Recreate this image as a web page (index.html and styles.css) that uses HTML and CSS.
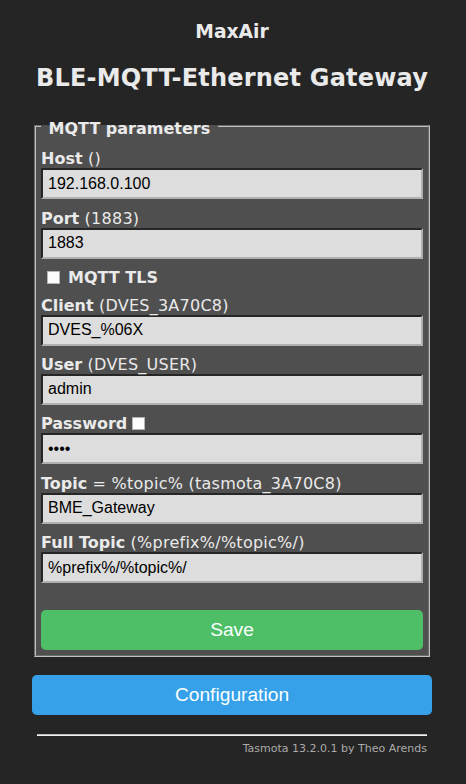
FILE: index.html
```html
<!DOCTYPE html>
<html>
<head>
<meta charset="utf-8">
<title>MaxAir - MQTT</title>
<link rel="stylesheet" href="styles.css">
</head>
<body>
<div class="page">
  <div class="head">
    <h3 class="brand">MaxAir</h3>
    <h2 class="title">BLE-MQTT-Ethernet Gateway</h2>
  </div>
  <fieldset class="panel">
    <legend class="legend">&nbsp;MQTT parameters&nbsp;</legend>
    <form class="form">
      <div class="field">
        <div class="lbl"><b>Host</b><span class="hint"> ()</span></div>
        <input class="inp" value="192.168.0.100">
      </div>
      <div class="field">
        <div class="lbl"><b>Port</b><span class="hint"> (1883)</span></div>
        <input class="inp" value="1883">
      </div>
      <div class="check"><span class="cb cb-tls"></span><b>MQTT TLS</b></div>
      <div class="field">
        <div class="lbl"><b>Client</b><span class="hint"> (DVES_3A70C8)</span></div>
        <input class="inp" value="DVES_%06X">
      </div>
      <div class="field">
        <div class="lbl"><b>User</b><span class="hint"> (DVES_USER)</span></div>
        <input class="inp" value="admin">
      </div>
      <div class="field">
        <div class="lbl"><b>Password</b><span class="cb cb-pw"></span></div>
        <input class="inp" type="password" value="****">
      </div>
      <div class="field">
        <div class="lbl"><b>Topic</b><span class="hint"> = %topic% (tasmota_3A70C8)</span></div>
        <input class="inp" value="BME_Gateway">
      </div>
      <div class="field">
        <div class="lbl"><b>Full Topic</b><span class="hint"> (%prefix%/%topic%/)</span></div>
        <input class="inp" value="%prefix%/%topic%/">
      </div>
      <button class="btn btn-save" type="button">Save</button>
    </form>
  </fieldset>
  <button class="btn btn-conf" type="button">Configuration</button>
  <div class="foot">
    <hr class="rule">
    <div class="ver">Tasmota 13.2.0.1 by Theo Arends</div>
  </div>
</div>
</body>
</html>
```

FILE: styles.css
```css
* {
  box-sizing: border-box;
}

html,
body {
  margin: 0;
}

body {
  background: #252525;
  color: #eaeaea;
  font-family: "DejaVu Sans", Verdana, sans-serif;
  padding: 21px 34px 0 32px;
}

.page {
  width: 400px;
}

.head {
  text-align: center;
}

.brand {
  margin: 0;
  font-size: 18.72px;
  line-height: 22px;
  font-weight: bold;
}

.title {
  margin: 21px 0 0;
  font-size: 24px;
  line-height: 28px;
  font-weight: bold;
  letter-spacing: 0.2px;
}

.panel {
  margin: 22px 2px 0;
  padding: 5px;
  border: 2px groove #c0c0c0;
  background: #4f4f4f;
  min-width: 0;
}

.legend {
  padding: 5px 2px 0;
  font-size: 16px;
  line-height: 19px;
  font-weight: bold;
}

.form {
  margin: 0;
  padding-top: 6px;
}

.field {
  margin-bottom: 9px;
}

.lbl,
.check {
  font-size: 16px;
  line-height: 18px;
  padding-top: 1.4px;
}

.hint {
  letter-spacing: 0.25px;
}

.check {
  margin-bottom: 8px;
}

.cb {
  display: inline-block;
  width: 13px;
  height: 13px;
  background: #fdfdfd;
  border: 1px solid #b4b4b4;
  vertical-align: -1px;
}

.cb-tls {
  margin: 0 8px 0 6px;
}

.cb-pw {
  margin-left: 5px;
}

.inp {
  display: block;
  width: 100%;
  height: 31px;
  margin: 0;
  padding: 0 5px;
  border-style: solid;
  border-width: 2px;
  border-color: #262626 #b0b0b0 #b0b0b0 #262626;
  background: #dddddd;
  color: #000000;
  font-family: "Liberation Sans", Arial, sans-serif;
  font-size: 16px;
  outline: none;
}

.btn {
  display: block;
  width: 100%;
  height: 40px;
  padding: 0;
  border: 0;
  border-radius: 4.8px;
  color: #faffff;
  font-family: "Liberation Sans", Arial, sans-serif;
  font-size: 19.2px;
  line-height: 40px;
  text-align: center;
}

.btn-save {
  margin-top: 27px;
  background: #4fbf67;
}

.btn-conf {
  margin-top: 18px;
  background: #36a1e8;
}

.foot {
  padding: 0 5px;
  text-align: right;
}

.rule {
  margin: 19px 0 5.5px;
  height: 2px;
  border: 0;
  border-top: 1px solid #bdbdbd;
  border-bottom: 1px solid #f2f2f2;
}

.ver {
  font-size: 11px;
  line-height: 13px;
  color: #aaaaaa;
}
```
